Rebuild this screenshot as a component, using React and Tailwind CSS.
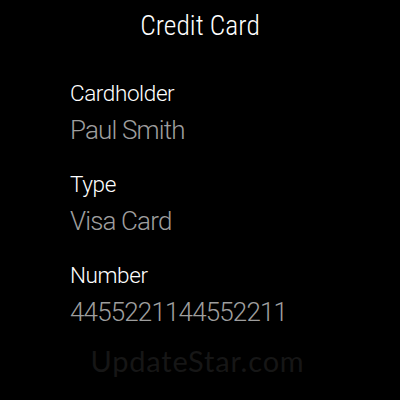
export default function App() {
  const rows = [
    ["Cardholder", "Paul Smith"],
    ["Type", "Visa Card"],
    ["Number", "4455221144552211"],
  ];
  return (
    <div
      className="w-[400px] h-[400px] bg-black overflow-hidden flex flex-col"
      style={{ fontFamily: "Roboto, 'Noto Sans', sans-serif" }}
    >
      <div className="pt-[10px] text-center text-white text-[27.5px] leading-[32px] font-light font-stretch-[85%]">
        Credit Card
      </div>
      <div className="mt-[38px] pl-[70px] flex flex-col gap-[26px]">
        {rows.map(([label, value]) => (
          <div key={label} className="flex flex-col">
            <div className="text-white text-[22.5px] leading-[26px] font-light font-stretch-[93%] tracking-[-0.4px]">
              {label}
            </div>
            <div className="mt-[9px] text-[#9e9e9e] text-[26px] leading-[30px] font-light font-stretch-[91%] tracking-[-0.85px]">
              {value}
            </div>
          </div>
        ))}
      </div>
      <div
        className="mt-[17px] pr-[5px] text-center text-[#161616] text-[29px] leading-[34px] tracking-[0.8px]"
        style={{ fontFamily: "Lato, sans-serif" }}
      >
        UpdateStar.com
      </div>
    </div>
  );
}
